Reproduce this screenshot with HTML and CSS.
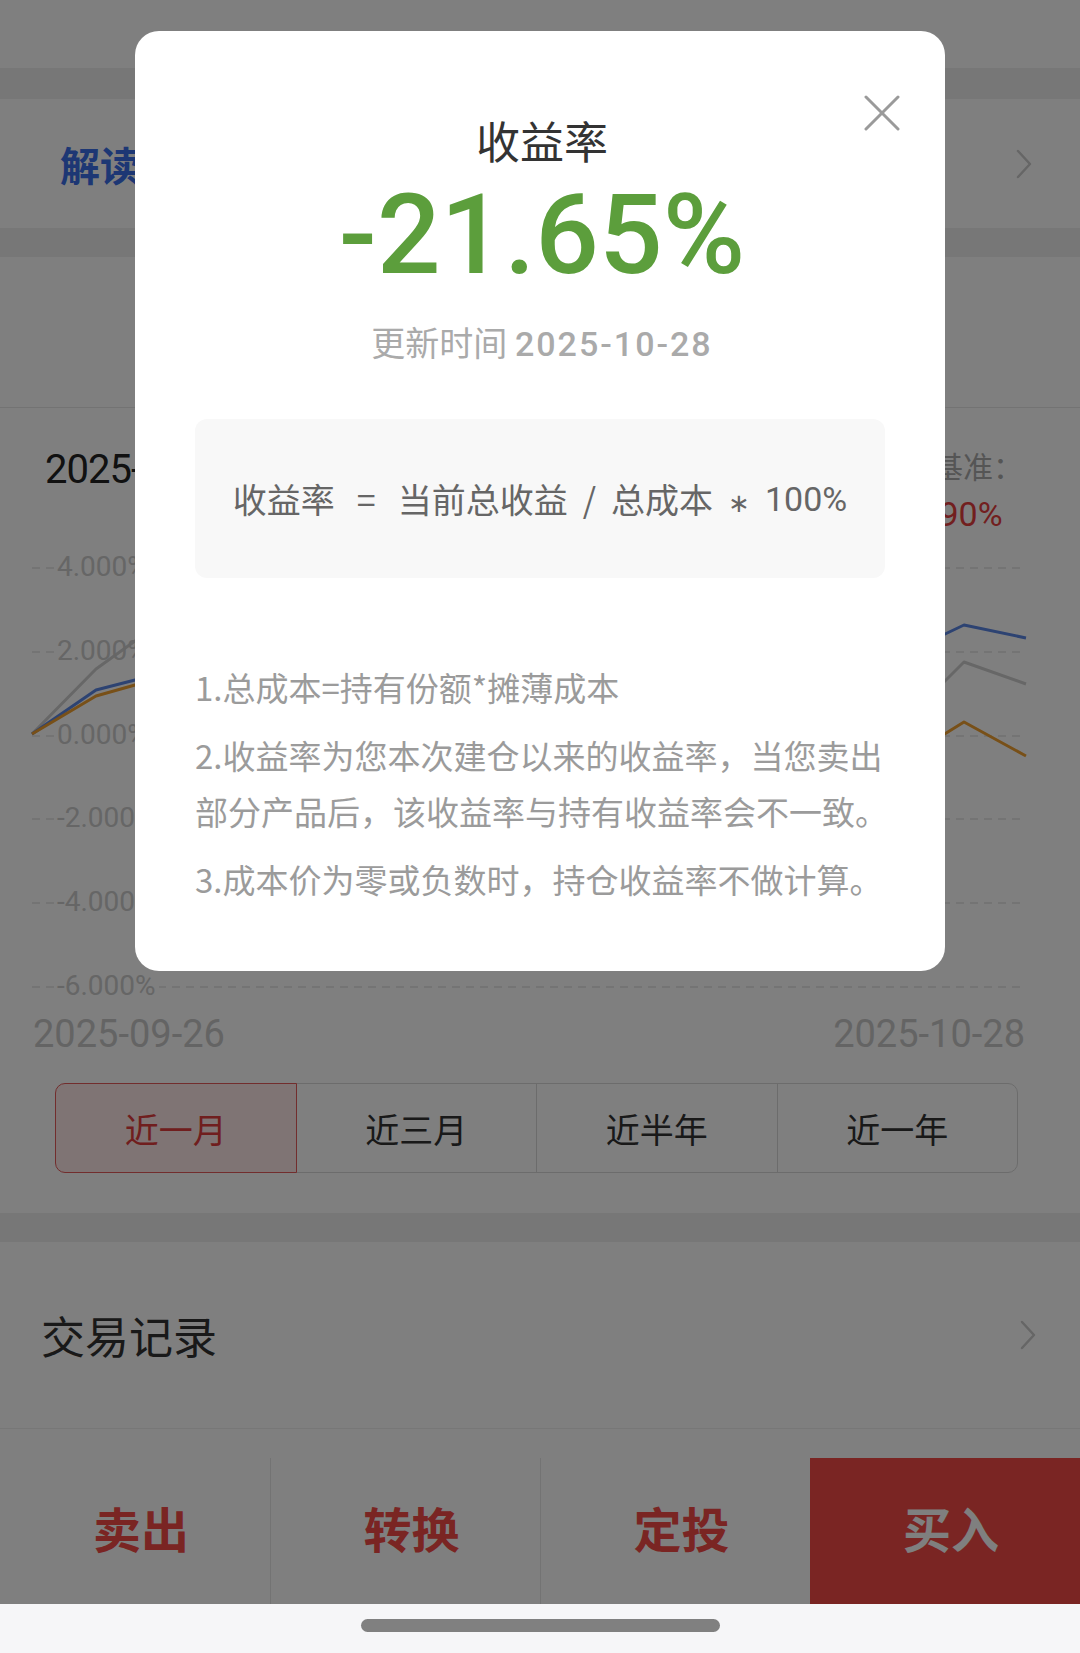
FILE: index.html
```html
<!DOCTYPE html>
<html lang="zh-CN">
<head>
    <meta charset="UTF-8">
    <meta name="viewport" content="width=device-width, initial-scale=1.0">
    <title>持仓详情</title>
    <link rel="stylesheet" href="styles.css">
</head>
<body>
    <div class="page">
        <header class="topbar">
            <span class="topbar-title">持仓详情</span>
        </header>
        <div class="gap gap-first"></div>

        <div class="row row-read">
            <span class="read-title">解读本基金收益表现</span>
            <svg class="chevron" width="16" height="30" viewBox="0 0 16 30">
                <polyline points="2,2 14,15 2,28" fill="none" stroke="#cccccc" stroke-width="2.5" stroke-linecap="round" stroke-linejoin="round"/>
            </svg>
        </div>
        <div class="gap"></div>

        <section class="summary"></section>

        <section class="chart">
            <div class="chart-head">
                <div class="chart-date">2025-10</div>
                <div class="legend">
                    <div class="legend-name">业绩基准：</div>
                    <div class="legend-val">+10.90%</div>
                </div>
            </div>

            <svg class="chart-svg" width="1080" height="470" viewBox="0 540 1080 470">
                <g class="grid">
                    <line x1="32" x2="1026" y1="568" y2="568"/>
                    <line x1="32" x2="1026" y1="652" y2="652"/>
                    <line x1="32" x2="1026" y1="736" y2="736"/>
                    <line x1="32" x2="1026" y1="819" y2="819"/>
                    <line x1="32" x2="1026" y1="903" y2="903"/>
                    <line x1="32" x2="1026" y1="987" y2="987"/>
                </g>
                <g fill="#ffffff">
                    <rect x="55" y="552" width="96" height="30"/>
                    <rect x="55" y="636" width="96" height="30"/>
                    <rect x="55" y="720" width="96" height="30"/>
                    <rect x="55" y="803" width="104" height="30"/>
                    <rect x="55" y="887" width="104" height="30"/>
                    <rect x="55" y="971" width="104" height="30"/>
                </g>
                <polyline class="line line-gray" points="32,734 96,669 135,641 260,610 400,630 560,600 700,640 840,628 943,683 964,662 1026,684"/>
                <polyline class="line line-blue" points="32,734 96,690 135,680 260,660 400,672 560,650 700,668 840,640 943,635 964,625 1026,638"/>
                <polyline class="line line-orange" points="32,734 96,696 135,685 260,676 400,690 560,700 700,712 840,720 943,735 964,722 1026,756"/>
                <g class="axis">
                    <text x="57" y="576">4.000%</text>
                    <text x="57" y="660">2.000%</text>
                    <text x="57" y="744">0.000%</text>
                    <text x="57" y="827">-2.000%</text>
                    <text x="57" y="911">-4.000%</text>
                    <text x="57" y="995">-6.000%</text>
                </g>
            </svg>

            <div class="axis-dates">
                <span>2025-09-26</span>
                <span>2025-10-28</span>
            </div>

            <div class="tabs">
                <div class="tab active">近一月</div>
                <div class="tab">近三月</div>
                <div class="tab">近半年</div>
                <div class="tab">近一年</div>
            </div>
        </section>
        <div class="gap"></div>

        <div class="row row-trade">
            <span>交易记录</span>
            <svg class="chevron" width="16" height="30" viewBox="0 0 16 30">
                <polyline points="2,2 14,15 2,28" fill="none" stroke="#cccccc" stroke-width="2.5" stroke-linecap="round" stroke-linejoin="round"/>
            </svg>
        </div>
        <div class="spacer"></div>

        <nav class="actions">
            <div class="action">卖出</div>
            <div class="action">转换</div>
            <div class="action">定投</div>
            <div class="action action-buy">买入</div>
        </nav>
        <div class="home"><span class="home-pill"></span></div>
    </div>

    <div class="mask">
        <div class="dialog">
            <svg class="dialog-close" width="36" height="36" viewBox="0 0 36 36">
                <line x1="2" y1="2" x2="34" y2="34" stroke="#9a9a9a" stroke-width="3" stroke-linecap="round"/>
                <line x1="34" y1="2" x2="2" y2="34" stroke="#9a9a9a" stroke-width="3" stroke-linecap="round"/>
            </svg>
            <div class="dialog-title">收益率</div>
            <div class="dialog-rate">-21.65%</div>
            <div class="dialog-time">更新时间 <span class="time-num">2025-10-28</span></div>

            <div class="formula">
                <span>收益率</span>
                <span class="op op-eq">=</span>
                <span>当前总收益</span>
                <span class="op">/</span>
                <span>总成本</span>
                <span class="op op-star">∗</span>
                <span class="num">100%</span>
            </div>

            <div class="notes">
                <p>1.总成本=持有份额*摊薄成本</p>
                <p>2.收益率为您本次建仓以来的收益率，当您卖出部分产品后，该收益率与持有收益率会不一致。</p>
                <p>3.成本价为零或负数时，持仓收益率不做计算。</p>
            </div>
        </div>
    </div>
</body>
</html>
```

FILE: styles.css
```css
*
{
    box-sizing: border-box;
    margin: 0;
    padding: 0;
}

body
{
    width: 1080px;
    height: 1653px;
    overflow: hidden;
    font-family: "Noto Sans CJK SC", sans-serif;
    background-color: #fff;
    color: #333;
}

.topbar
{
    height: 68px;
    display: flex;
    justify-content: center;
    padding-top: 28px;
}

.topbar-title
{
    font-size: 34px;
    line-height: 40px;
    color: #222;
}

.gap
{
    height: 29px;
    background-color: #efefef;
}

.gap-first
{
    height: 31px;
}

.row
{
    display: flex;
    align-items: center;
    justify-content: space-between;
}

.row-read
{
    height: 129px;
    padding: 0 48px 0 60px;
}

.read-title
{
    font-size: 40px;
    font-weight: bold;
    line-height: 1;
    color: #3a6ee8;
}

.summary
{
    height: 151px;
    border-bottom: 1px solid #e6e6e6;
}

/* chart block */
.chart
{
    padding: 34px 0 40px;
}

.chart-head
{
    height: 98px;
    display: flex;
    justify-content: space-between;
    padding: 0 57px 0 45px;
}

.chart-date
{
    font-family: Roboto, sans-serif;
    font-size: 40px;
    line-height: 56px;
    letter-spacing: -1px;
    color: #222;
}

.legend-name
{
    font-size: 30px;
    line-height: 46px;
    color: #aaa;
}

.legend-val
{
    font-family: Roboto, sans-serif;
    font-size: 34px;
    line-height: 52px;
    color: #e53e3e;
}

.chart-svg
{
    display: block;
}

.grid line
{
    stroke: #e2e2e2;
    stroke-width: 1.5;
    stroke-dasharray: 8 6;
}

.line
{
    fill: none;
    stroke-width: 3;
    stroke-linejoin: round;
}

.line-gray
{
    stroke: #cfcfcf;
}

.line-blue
{
    stroke: #5b86e5;
}

.line-orange
{
    stroke: #f0a030;
}

.axis text
{
    font-family: Roboto, sans-serif;
    font-size: 28px;
    fill: #cccccc;
}

.axis-dates
{
    display: flex;
    justify-content: space-between;
    padding: 0 55px 0 33px;
    font-family: Roboto, sans-serif;
    font-size: 38px;
    line-height: 48px;
    color: #c8c8c8;
}

.tabs
{
    display: flex;
    margin: 25px 62px 0 55px;
}

.tab
{
    flex: 1;
    height: 90px;
    display: flex;
    align-items: center;
    justify-content: center;
    font-size: 34px;
    color: #333;
    border: 1px solid #d8d8d8;
    margin-left: -1px;
}

.tab:first-child
{
    margin-left: 0;
    border-radius: 10px 0 0 10px;
}

.tab:last-child
{
    border-radius: 0 10px 10px 0;
}

.tab.active
{
    position: relative;
    z-index: 1;
    color: #e03c3c;
    background-color: #ffe8e8;
    border-color: #e45a5a;
}

.row-trade
{
    height: 187px;
    padding: 0 44px 0 41px;
    font-size: 44px;
    color: #333;
    border-bottom: 1px solid #eee;
}

.spacer
{
    height: 29px;
}

.actions
{
    display: grid;
    grid-template-columns: repeat(4, 1fr);
    height: 146px;
}

.action
{
    display: flex;
    align-items: center;
    justify-content: center;
    padding: 0 0 8px 12px;
    font-size: 48px;
    font-weight: bold;
    color: #f44a46;
    border-left: 1px solid #e6e6e6;
}

.action:first-child
{
    border-left: none;
}

.action-buy
{
    color: #fff;
    background-color: #f44a46;
    border-left: none;
}

.home
{
    height: 49px;
    display: flex;
    justify-content: center;
    padding-top: 15px;
    background-color: #f6f6f8;
}

.home-pill
{
    width: 359px;
    height: 13px;
    border-radius: 7px;
    background-color: #808080;
}

/* popup */
.mask
{
    position: fixed;
    top: 0;
    left: 0;
    right: 0;
    bottom: 49px;
    z-index: 10;
    display: flex;
    justify-content: center;
    align-items: flex-start;
    background-color: rgba(0, 0, 0, 0.5);
}

.dialog
{
    position: relative;
    width: 810px;
    margin-top: 31px;
    padding: 79px 56px 64px 60px;
    border-radius: 24px;
    background-color: #fff;
}

.dialog-close
{
    position: absolute;
    top: 64px;
    right: 45px;
}

.dialog-title
{
    text-align: center;
    font-size: 44px;
    line-height: 60px;
    color: #333;
}

.dialog-rate
{
    text-align: center;
    font-family: Roboto, sans-serif;
    font-weight: 500;
    font-size: 112px;
    line-height: 130px;
    color: #5c9e3c;
}

.dialog-time
{
    margin-top: 20px;
    text-align: center;
    font-size: 34px;
    line-height: 44px;
    color: #aaa;
}

.time-num
{
    font-family: Roboto, sans-serif;
    font-weight: 500;
    letter-spacing: 2px;
}

.formula
{
    height: 159px;
    margin: 53px 4px 0 0;
    display: flex;
    align-items: center;
    justify-content: center;
    font-size: 34px;
    color: #666;
    border-radius: 12px;
    background-color: #f8f8f8;
}

.op
{
    margin: 0 15px;
}

.op-eq
{
    margin: 0 22px;
}

.op-star
{
    font-size: 26px;
    margin: 4px 15px 0;
}

.num
{
    font-family: Roboto, sans-serif;
    font-size: 34px;
}

.notes
{
    margin-top: 81px;
}

.notes p
{
    font-size: 33px;
    line-height: 56px;
    color: #9b9b9b;
}

.notes p + p
{
    margin-top: 12px;
}
```
